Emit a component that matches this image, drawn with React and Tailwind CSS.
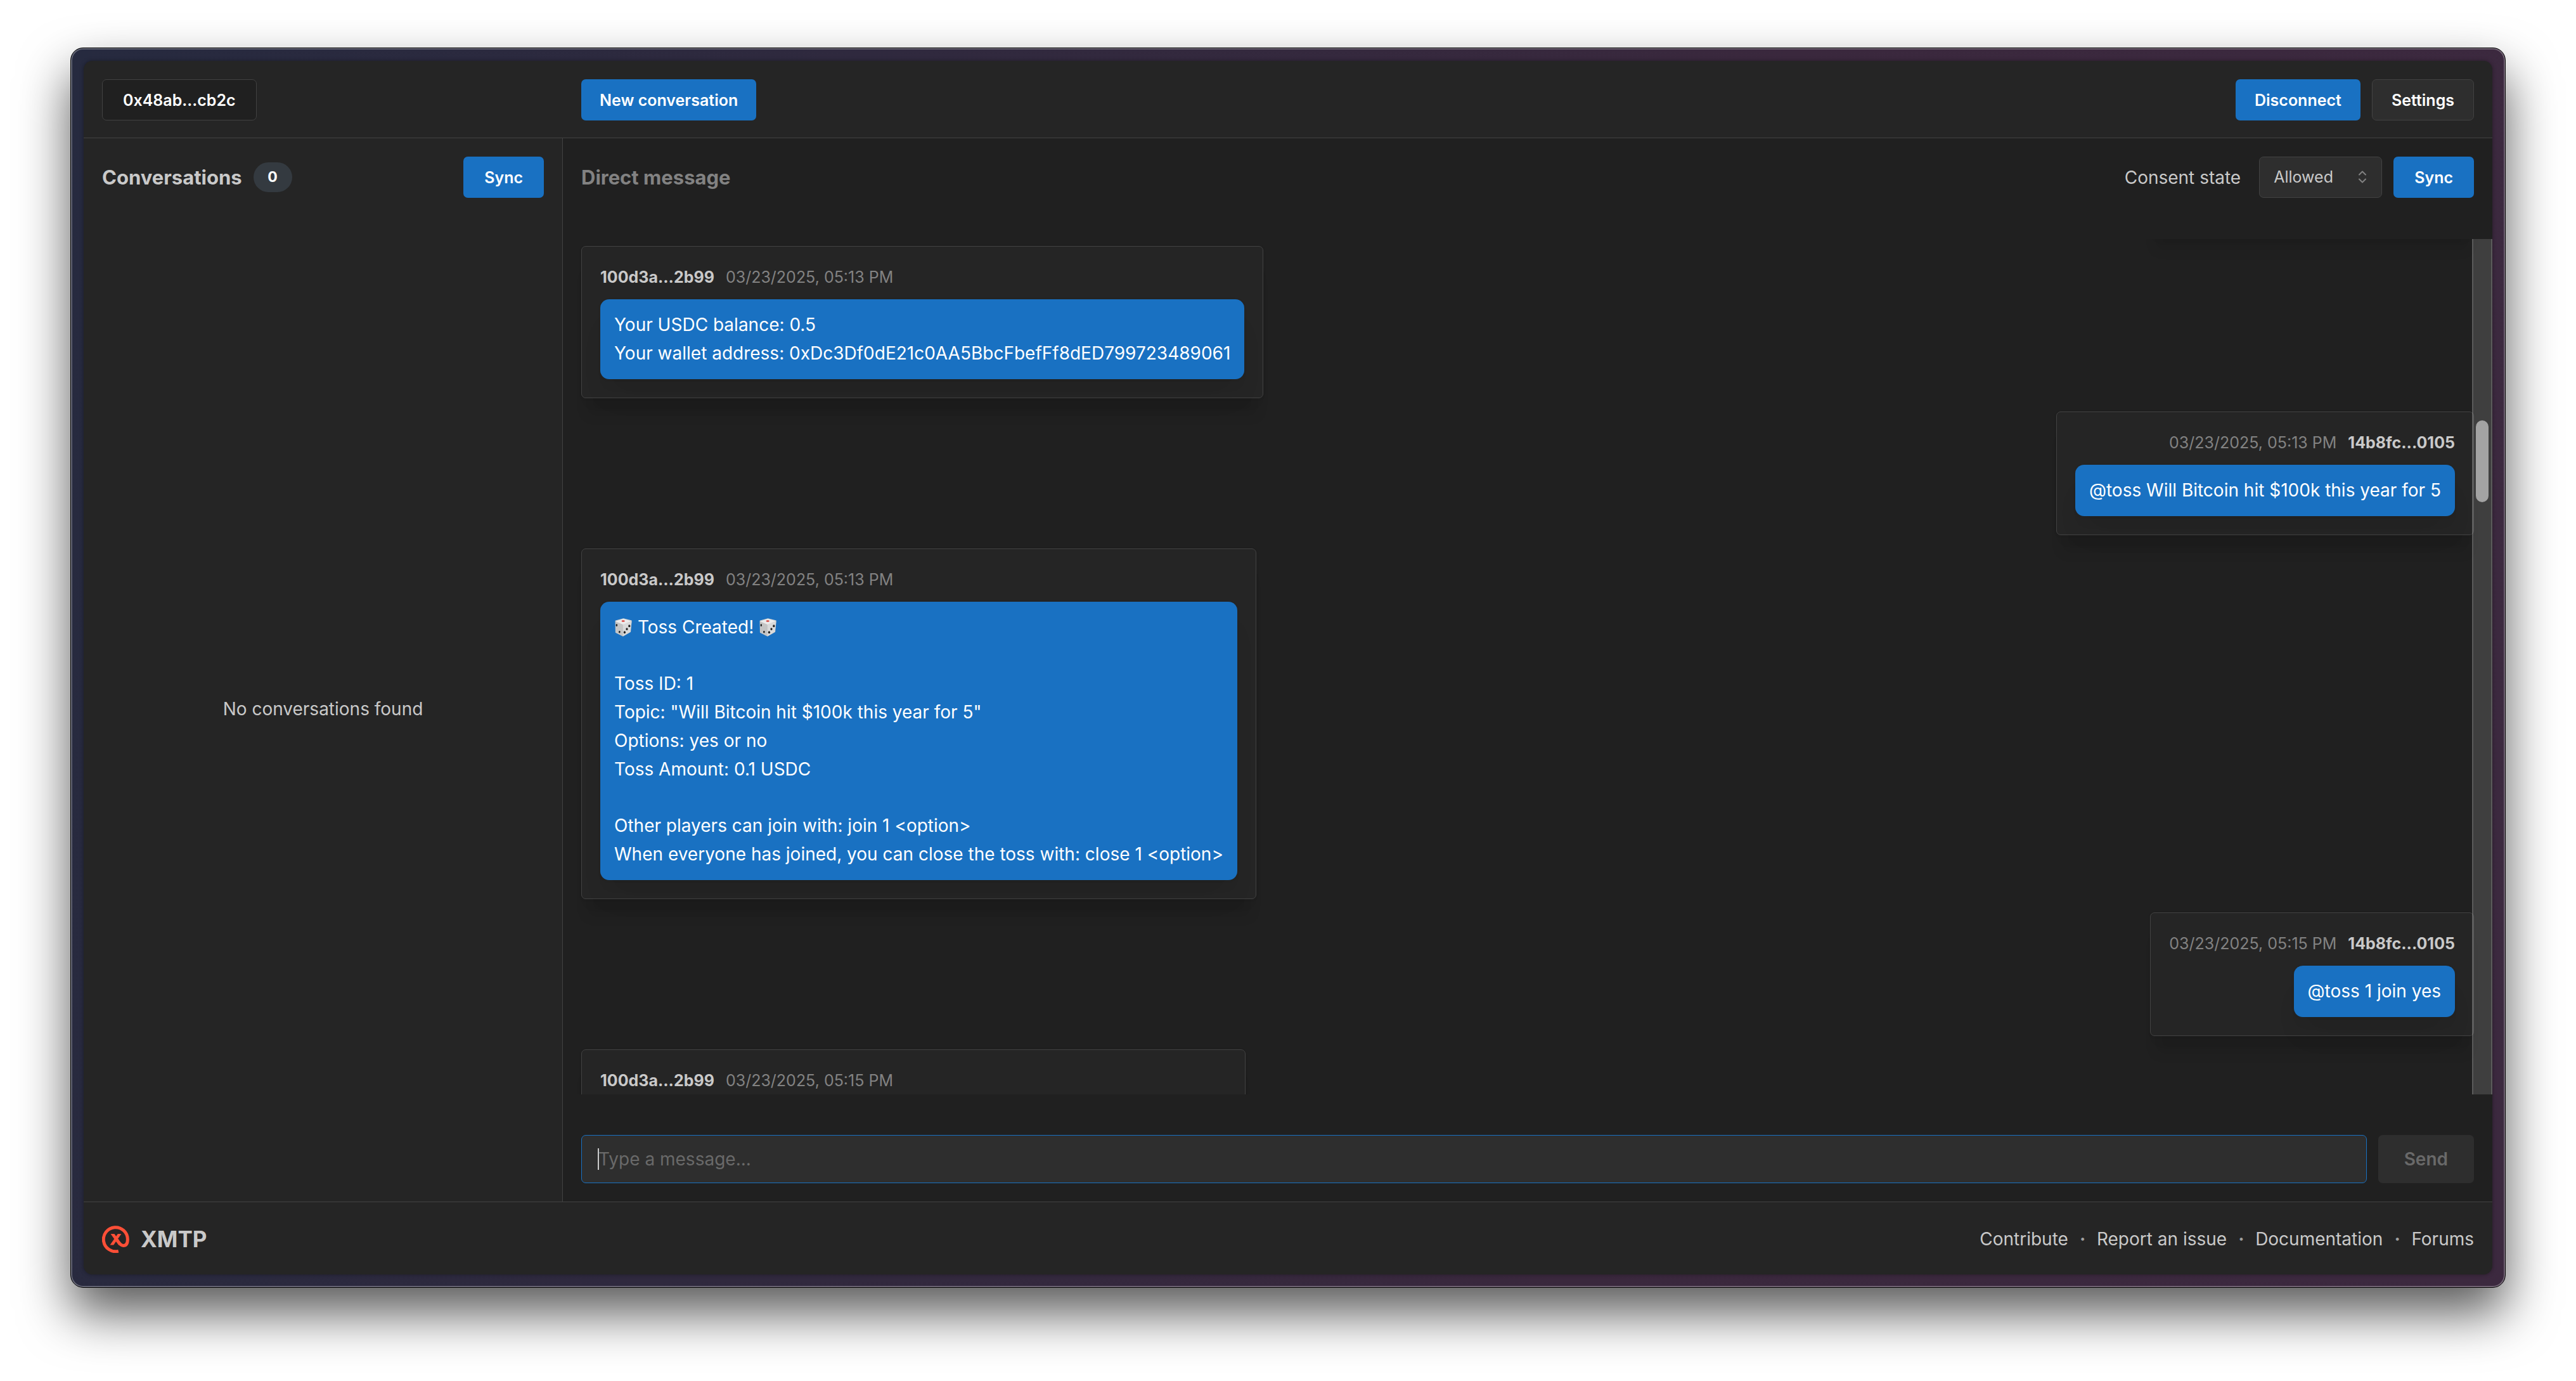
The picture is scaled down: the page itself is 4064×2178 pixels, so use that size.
import { useState } from "react";

const buttonBase =
  "flex h-[65px] items-center justify-center rounded-[7px] pt-px text-[25px] leading-none font-semibold text-white whitespace-nowrap";

const cardBase =
  "flex flex-col rounded-[7px] border border-[#424242] bg-[#252525] shadow-[0_1px_5px_rgba(0,0,0,0.05),0_36px_18px_-9px_rgba(0,0,0,0.08),0_18px_18px_-9px_rgba(0,0,0,0.03)]";

function Dice() {
  return (
    <svg viewBox="0 0 90 90" className="inline-block size-[29px] align-[-5px]" role="img" aria-label="dice">
      <path d="M8 14 45 4 83 13 78 66 43 86 9 69Z" fill="#cfcfcf" stroke="#cfcfcf" strokeWidth="6" strokeLinejoin="round" />
      <path d="M6 17 43 31V88L9 70Z" fill="#c4c4c4" />
      <path d="M43 31 85 16 79 67 43 88Z" fill="#dadada" />
      <path d="M7 15 45 3 84 14 43 31Z" fill="#ececec" />
      <ellipse cx="44" cy="14" rx="8" ry="4" fill="#d8413c" />
      <ellipse cx="12" cy="34" rx="4" ry="6" fill="#222" />
      <ellipse cx="26" cy="67" rx="4" ry="6" fill="#222" />
      <ellipse cx="74" cy="38" rx="5" ry="6" fill="#222" />
      <ellipse cx="62" cy="53" rx="5" ry="6" fill="#222" />
      <ellipse cx="51" cy="69" rx="5" ry="6" fill="#222" />
    </svg>
  );
}

function Logo() {
  return (
    <svg viewBox="0 0 130 130" className="size-[43px]" aria-hidden="true">
      <g fill="none" stroke="#fc4f37" strokeWidth="15">
        <path d="M78 121.500A57.500 57.500 0 1 1 122 65C122 84 115 95 102 95C91 95 86 88 79 79L70 66" />
      </g>
      <path d="M41 39H59L92 86 80 94Z" fill="#fc4f37" />
      <path d="M75 39H92L55 92H38Z" fill="#fc4f37" />
    </svg>
  );
}

function Message({ sender, time, own, groups }) {
  return (
    <li
      className={`${cardBase} gap-[15px] p-[29px] ${own ? "items-end self-end" : "items-start self-start"}`}
    >
      <div className={`flex gap-[18px] text-[25px] leading-[39px] ${own ? "flex-row-reverse" : ""}`}>
        <span className="font-bold text-[#c9c9c9]">{sender}</span>
        <time className="text-[#828282]">{time}</time>
      </div>
      <div className="flex flex-col gap-11 rounded-[14px] bg-[#1971c2] px-[22px] py-[18px] text-[28px] leading-[45px] text-white shadow-[0_1px_5px_rgba(0,0,0,0.05),0_36px_45px_-9px_rgba(0,0,0,0.05),0_18px_18px_-9px_rgba(0,0,0,0.04)]">
        {groups.map((lines, i) => (
          <div key={i}>
            {lines.map((line, j) => (
              <p key={j}>{line}</p>
            ))}
          </div>
        ))}
      </div>
    </li>
  );
}

const messages = [
  {
    sender: "100d3a...2b99",
    time: "03/23/2025, 05:13 PM",
    groups: [["Your USDC balance: 0.5", "Your wallet address: 0xDc3Df0dE21c0AA5BbcFbefFf8dED799723489061"]],
  },
  {
    sender: "14b8fc...0105",
    time: "03/23/2025, 05:13 PM",
    own: true,
    groups: [["@toss Will Bitcoin hit $100k this year for 5"]],
  },
  {
    sender: "100d3a...2b99",
    time: "03/23/2025, 05:13 PM",
    groups: [
      [
        <>
          <Dice /> Toss Created! <Dice />
        </>,
      ],
      ["Toss ID: 1", 'Topic: "Will Bitcoin hit $100k this year for 5"', "Options: yes or no", "Toss Amount: 0.1 USDC"],
      [
        "Other players can join with: join 1 <option>",
        "When everyone has joined, you can close the toss with: close 1 <option>",
      ],
    ],
  },
  {
    sender: "14b8fc...0105",
    time: "03/23/2025, 05:15 PM",
    own: true,
    groups: [["@toss 1 join yes"]],
  },
];

const links = ["Contribute", "Report an issue", "Documentation", "Forums"];

export default function App() {
  const [text, setText] = useState("");
  return (
    <div className="flex h-screen overflow-hidden bg-white px-[111px] pt-[75px] pb-[147px] font-[Inter,sans-serif] text-[28px] text-[#c9c9c9]">
      <div className="flex min-w-0 flex-1 rounded-[20px] border border-black bg-linear-[100deg,#262a3f,#2f293e_30%,#3a283d_65%,#3c293f] p-5 shadow-[inset_0_0_0_2px_rgba(255,255,255,0.28),0_40px_80px_rgba(0,0,0,0.65)]">
        <div className="flex min-w-0 flex-1 flex-col overflow-hidden rounded-[14px] bg-[#252525] shadow-[0_0_6px_rgba(0,0,0,0.35)]">
          <header className="flex shrink-0 items-start border-b border-[#424242] px-[29px] pt-[29px] pb-[27px]">
            <div className="flex w-[756px] shrink-0">
              <button className={`${buttonBase} border border-[#424242] bg-[#202020] px-8`}>0x48ab...cb2c</button>
            </div>
            <button className={`${buttonBase} bg-[#1971c2] px-[29px]`}>New conversation</button>
            <div className="ml-auto flex gap-[18px]">
              <button className={`${buttonBase} bg-[#1971c2] px-[30px]`}>Disconnect</button>
              <button className={`${buttonBase} border border-[#424242] bg-[#2e2e2e] px-[30px]`}>Settings</button>
            </div>
          </header>

          <div className="flex min-h-0 flex-1">
            <aside className="flex w-[756px] shrink-0 flex-col border-r border-[#424242] px-[29px] pt-[29px]">
              <div className="flex items-center gap-[18px]">
                <h2 className="text-[31px] leading-none font-bold">Conversations</h2>
                <span className="flex h-[47px] w-[61px] items-center justify-center rounded-full bg-[#343a40] text-[23px] font-bold text-white">
                  0
                </span>
                <button className={`${buttonBase} ml-auto bg-[#1971c2] px-[33px]`}>Sync</button>
              </div>
              <div className="mt-[29px] flex flex-1 items-center justify-center">
                <p>No conversations found</p>
              </div>
            </aside>

            <main className="flex min-w-0 flex-1 flex-col bg-[#202020]">
              <div className="flex items-center px-[29px] pt-[29px]">
                <h1 className="text-[31px] leading-none font-bold text-[#828282]">Direct message</h1>
                <label htmlFor="consent" className="mr-[29px] ml-auto">
                  Consent state
                </label>
                <div className="relative mr-[18px]">
                  <select
                    id="consent"
                    className="h-[65px] w-[194px] appearance-none rounded-[7px] border border-[#424242] bg-[#2e2e2e] pl-[22px] text-[25px] text-[#c9c9c9]"
                  >
                    <option>Allowed</option>
                  </select>
                  <svg
                    viewBox="0 0 14 22"
                    className="pointer-events-none absolute top-[21px] right-[24px] h-[22px] w-[14px]"
                    fill="none"
                    stroke="#828282"
                    strokeWidth="2"
                    strokeLinecap="round"
                    strokeLinejoin="round"
                  >
                    <path d="M2 7.500 7 2.500 12 7.500M2 14.500 7 19.500 12 14.500" />
                  </svg>
                </div>
                <button className={`${buttonBase} bg-[#1971c2] px-[33px]`}>Sync</button>
              </div>

              <div className="relative mt-[65px] min-h-0 flex-1 overflow-hidden">
                <ul className="-mt-[110px] flex flex-col gap-[21px] px-[29px]">
                  <li className={`${cardBase} h-[100px] w-[511px] self-end`} aria-hidden="true" />
                  {messages.map((m, i) => (
                    <Message key={i} {...m} />
                  ))}
                  <li className={`${cardBase} w-[1048px] self-start p-[29px]`}>
                    <div className="flex gap-[18px] text-[25px] leading-[39px]">
                      <span className="font-bold">100d3a...2b99</span>
                      <time className="text-[#828282]">03/23/2025, 05:15 PM</time>
                    </div>
                  </li>
                </ul>
                <div className="absolute inset-y-0 right-0 w-8 border-x-2 border-white/15 bg-white/14 px-1">
                  <div className="mt-[286px] h-[129px] rounded-full bg-[#a3a3a3]" />
                </div>
              </div>

              <form className="mt-16 flex gap-[18px] px-[29px] pb-[29px]" onSubmit={(e) => e.preventDefault()}>
                <div className="relative flex-1">
                  <input
                    type="text"
                    aria-label="Message"
                    value={text}
                    onChange={(e) => setText(e.target.value)}
                    placeholder="Type a message..."
                    className="h-[76px] w-full rounded-[7px] border border-[#1971c2] bg-[#2e2e2e] px-[26px] text-[28px] outline-none placeholder:text-[#696969]"
                  />
                  <span className="pointer-events-none absolute top-[21px] left-[26px] h-[34px] w-[2px] bg-[#c9c9c9]" />
                </div>
                <button
                  disabled
                  className="h-[76px] rounded-[7px] bg-[#2e2e2e] px-[41px] text-[28px] font-semibold text-[#696969]"
                >
                  Send
                </button>
              </form>
            </main>
          </div>

          <footer className="flex h-[115px] shrink-0 items-center justify-between border-t border-[#424242] px-[29px] pt-[2px]">
            <div className="flex items-center gap-[18px]">
              <Logo />
              <span className="text-[35px] leading-none font-bold">XMTP</span>
            </div>
            <nav className="flex items-center gap-[18px]">
              {links.map((l, i) => (
                <span key={l} className="flex items-center gap-[18px]">
                  {i > 0 && <span className="w-[9px] text-center font-bold text-[#a0a0a0]">·</span>}
                  <a href="#">{l}</a>
                </span>
              ))}
            </nav>
          </footer>
        </div>
      </div>
    </div>
  );
}
